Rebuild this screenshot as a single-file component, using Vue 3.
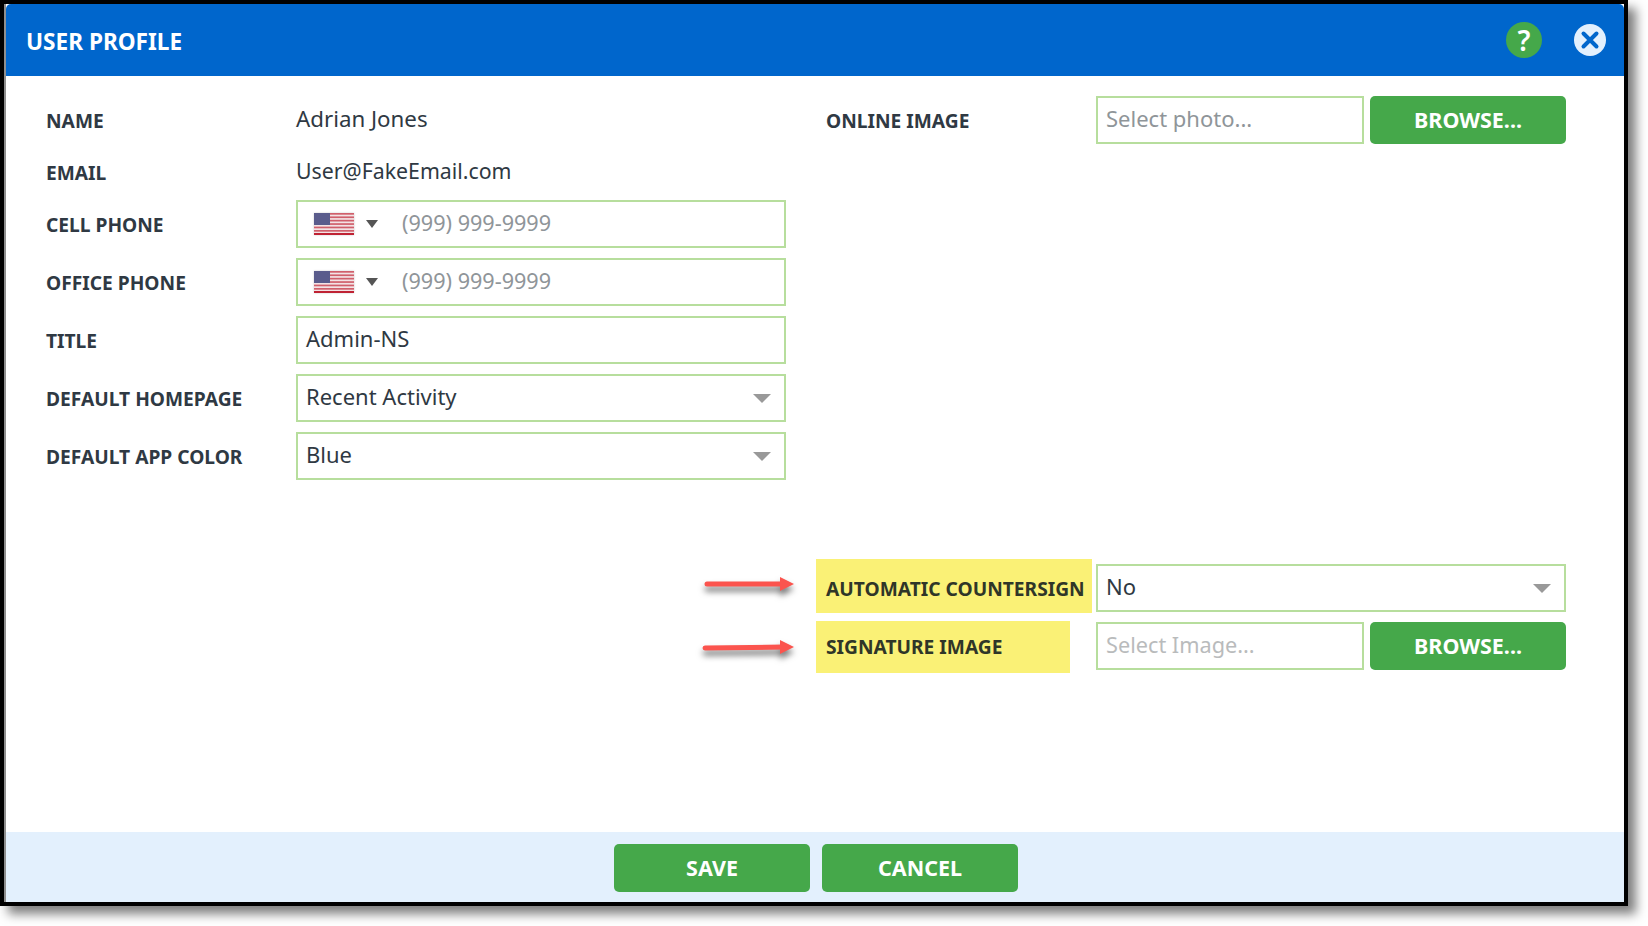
<template>
  <div class="page">
    <div class="frame">
      <div class="modal">
        <header class="modal__header">
          <h1 class="modal__title">USER PROFILE</h1>
          <div class="modal__actions">
            <span class="help-icon">?</span>
            <svg class="close-icon" width="32" height="32" viewBox="0 0 32 32">
              <circle cx="16" cy="16" r="16" fill="#e3f0fd" />
              <path d="M9.5 9.5 22.5 22.5M22.5 9.5 9.5 22.5" stroke="#0066cc" stroke-width="4" stroke-linecap="round" />
            </svg>
          </div>
        </header>

        <div class="modal__body">
          <div class="col">
            <div class="row"><label class="label">NAME</label><span class="value value--name">Adrian Jones</span></div>
            <div class="row"><label class="label">EMAIL</label><span class="value">User@FakeEmail.com</span></div>

            <div v-for="phone in phones" :key="phone" class="row row--field">
              <label class="label">{{ phone }}</label>
              <div class="field field--phone">
                <svg class="flag" width="40" height="22" viewBox="0 0 40 22">
                  <rect width="40" height="22" fill="#f3e3e5" />
                  <rect v-for="n in 6" :key="n" y="0" width="40" height="1.7" fill="#d0606c" :transform="`translate(0 ${(n - 1) * 3.4})`" />
                  <rect y="20" width="40" height="2" fill="#bf2233" />
                  <rect width="16" height="12" fill="#5a5c8c" />
                </svg>
                <span class="phone-caret"></span>
                <span class="placeholder">(999) 999-9999</span>
              </div>
            </div>

            <div class="row row--field">
              <label class="label">TITLE</label>
              <div class="field">Admin-NS</div>
            </div>

            <div v-for="item in selects" :key="item.label" class="row row--field">
              <label class="label">{{ item.label }}</label>
              <div class="field field--select">{{ item.value }}<span class="select-caret"></span></div>
            </div>
          </div>

          <div class="col">
            <div class="row">
              <label class="label label--side">ONLINE IMAGE</label>
              <div class="file">
                <div class="field field--file"><span class="placeholder">Select photo...</span></div>
                <button class="btn">BROWSE...</button>
              </div>
            </div>

            <div class="row row--countersign">
              <label class="label label--side label--mark label--mark-a">
                AUTOMATIC COUNTERSIGN
                <svg class="arrow arrow--a" width="100" height="30" viewBox="0 0 100 30">
                  <path d="M5 10H82" stroke="#fb544e" stroke-width="5" stroke-linecap="round" />
                  <path d="M78 3 92 10 78 17Z" fill="#fb544e" />
                </svg>
              </label>
              <div class="field field--select">No<span class="select-caret"></span></div>
            </div>

            <div class="row row--signature">
              <label class="label label--side label--mark label--mark-b">
                SIGNATURE IMAGE
                <svg class="arrow arrow--b" width="100" height="30" viewBox="0 0 100 30">
                  <path d="M3 11 82 10" stroke="#fb544e" stroke-width="5" stroke-linecap="round" />
                  <path d="M78 3 92 10 78 17Z" fill="#fb544e" />
                </svg>
              </label>
              <div class="file">
                <div class="field field--file"><span class="placeholder placeholder--light">Select Image...</span></div>
                <button class="btn">BROWSE...</button>
              </div>
            </div>
          </div>
        </div>

        <footer class="modal__footer">
          <button class="btn btn--wide">SAVE</button>
          <button class="btn btn--wide">CANCEL</button>
        </footer>
      </div>
    </div>
  </div>
</template>

<script setup>
const phones = ['CELL PHONE', 'OFFICE PHONE']

const selects = [
  { label: 'DEFAULT HOMEPAGE', value: 'Recent Activity' },
  { label: 'DEFAULT APP COLOR', value: 'Blue' }
]
</script>

<style>
html,
body {
  margin: 0;
  background: #fff;
}
</style>

<style scoped>
.page {
  width: 1648px;
  height: 926px;
  overflow: hidden;
}

.frame {
  width: 1620px;
  height: 898px;
  border: 4px solid #000;
  box-shadow: 8px 8px 10px rgba(0, 0, 0, 0.5);
  font-family: 'Noto Sans', sans-serif;
  color: #2f3943;
}

.modal {
  height: 100%;
  display: flex;
  flex-direction: column;
  box-sizing: border-box;
  border-left: 2px solid #8e8e8e;
  background: #fff;
}

.modal__header {
  height: 72px;
  flex-shrink: 0;
  display: flex;
  align-items: center;
  justify-content: space-between;
  padding: 0 18px 0 20px;
  background: #0066cc;
  border-radius: 5px 5px 0 0;
}

.modal__title {
  margin: 0;
  padding-top: 2px;
  font-size: 22.6px;
  font-weight: 700;
  color: #fff;
}

.modal__actions {
  display: flex;
  align-items: center;
  gap: 32px;
}

.help-icon {
  width: 36px;
  height: 36px;
  border-radius: 50%;
  display: flex;
  align-items: center;
  justify-content: center;
  background: #45a84a;
  color: #fff;
  font-size: 28px;
  font-weight: 600;
  line-height: 1;
}

.close-icon {
  display: block;
}

.modal__body {
  flex: 1;
  display: grid;
  grid-template-columns: 770px 750px;
  padding: 20px 0 0 40px;
}

.col {
  display: flex;
  flex-direction: column;
}

.row {
  display: flex;
  align-items: center;
  height: 48px;
  margin-bottom: 4px;
}

.row--field {
  margin-bottom: 10px;
}

.row--countersign {
  margin-top: 416px;
  margin-bottom: 10px;
}

.label {
  width: 250px;
  flex-shrink: 0;
  font-size: 19.2px;
  font-weight: 700;
  white-space: nowrap;
}

.label--side {
  position: relative;
  box-sizing: border-box;
  width: 280px;
  padding-left: 10px;
}

.label--mark {
  display: flex;
  align-items: center;
  background: #faf176;
  color: #2f3628;
}

.label--mark-a {
  width: 276px;
  height: 54px;
  margin: -5px 4px -1px 0;
  padding-top: 4px;
}

.label--mark-b {
  width: 254px;
  height: 52px;
  margin: -1px 26px -3px 0;
  padding-bottom: 2px;
}

.arrow {
  position: absolute;
  top: 15px;
  left: -114px;
  filter: drop-shadow(0 5px 3px rgba(0, 0, 0, 0.55));
}

.arrow--b {
  top: 16px;
}

.value {
  font-size: 21.3px;
  padding-bottom: 3px;
}

.value--name {
  font-size: 22.3px;
}

.field {
  box-sizing: border-box;
  width: 490px;
  height: 48px;
  display: flex;
  align-items: center;
  padding: 0 8px 4px;
  border: 2px solid #b7de9d;
  background: #fff;
  font-size: 22px;
}

.field--phone {
  padding-left: 16px;
  font-size: 21.6px;
}

.field--select {
  position: relative;
  width: 470px;
}

.col:first-child .field--select {
  width: 490px;
}

.field--file {
  width: 268px;
}

.flag {
  display: block;
  flex-shrink: 0;
  margin-top: 4px;
  box-shadow: 0 0 2px rgba(0, 0, 0, 0.2);
}

.phone-caret {
  width: 0;
  height: 0;
  margin: 4px 24px 0 12px;
  border-left: 6px solid transparent;
  border-right: 6px solid transparent;
  border-top: 8px solid #555;
}

.select-caret {
  position: absolute;
  right: 13px;
  top: 18px;
  width: 0;
  height: 0;
  border-left: 9px solid transparent;
  border-right: 9px solid transparent;
  border-top: 9px solid #999;
}

.placeholder {
  color: #8f9599;
}

.placeholder--light {
  color: #b9bbbc;
  font-size: 21.7px;
}

.file {
  display: flex;
  gap: 6px;
}

.btn {
  width: 196px;
  height: 48px;
  padding: 0 0 2px;
  border: 0;
  border-radius: 5px;
  background: #45a84a;
  color: #fff;
  font-family: inherit;
  font-size: 21.5px;
  font-weight: 700;
}

.modal__footer {
  height: 70px;
  flex-shrink: 0;
  display: flex;
  align-items: center;
  justify-content: center;
  gap: 12px;
  background: #e3f0fd;
  padding: 2px 0 0 2px;
  box-sizing: border-box;
}
</style>
